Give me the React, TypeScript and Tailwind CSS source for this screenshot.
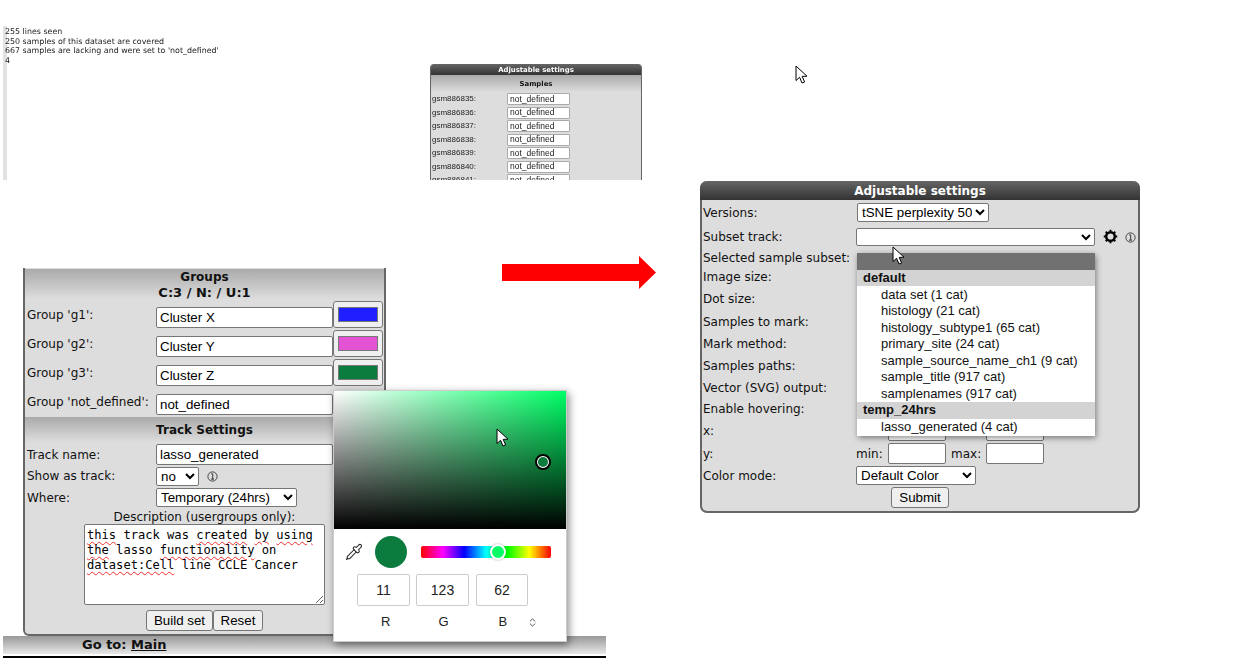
import { ChevronsUpDown, Pipette } from 'lucide-react';

const sampleIds = ['gsm886835', 'gsm886836', 'gsm886837', 'gsm886838', 'gsm886839', 'gsm886840', 'gsm886841'];
const groups = [
  { label: "Group 'g1':", value: 'Cluster X', color: 'bg-[#1f1fff]' },
  { label: "Group 'g2':", value: 'Cluster Y', color: 'bg-[#e353d3]' },
  { label: "Group 'g3':", value: 'Cluster Z', color: 'bg-[#0b7b3e]' },
];
const defaultTracks = [
  'data set (1 cat)',
  'histology (21 cat)',
  'histology_subtype1 (65 cat)',
  'primary_site (24 cat)',
  'sample_source_name_ch1 (9 cat)',
  'sample_title (917 cat)',
  'samplenames (917 cat)',
];

const field = "border border-[#767676] rounded-[2px] bg-white text-black font-['Liberation_Sans'] text-[13.33px] outline-none";
const nativeButton = "border border-[#767676] rounded-[3px] bg-[#efefef] text-black font-['Liberation_Sans'] text-[13.33px]";
const squiggle = 'underline decoration-wavy decoration-[#f03030] decoration-1 underline-offset-2';

function Cursor({ className }: { className: string }) {
  return (
    <svg className={className} width="14" height="20" viewBox="0 0 14 20">
      <path d="M1 1 L1 15.5 L4.6 12.3 L7 18 L9.6 17 L7.2 11.4 L12 11.2 Z" fill="#fff" stroke="#000" strokeWidth="1" />
    </svg>
  );
}

function InfoIcon({ className }: { className: string }) {
  return (
    <svg className={className} width="11" height="11" viewBox="0 0 10 10" fill="none" stroke="#333">
      <circle cx="5" cy="5" r="4.2" strokeWidth="0.8" />
      <path d="M3.8 2.6 H5.2 V7.4 M3.6 7.4 H6.4" strokeWidth="0.9" />
    </svg>
  );
}

function GearIcon() {
  return (
    <svg className="ml-[8px]" width="15" height="15" viewBox="0 0 16 16" fill="none" stroke="#000">
      <circle cx="8" cy="8" r="4.6" strokeWidth="2.6" />
      <path
        d="M8 0.8 V2.6 M8 13.4 V15.2 M0.8 8 H2.6 M13.4 8 H15.2 M2.9 2.9 L4.1 4.1 M11.9 11.9 L13.1 13.1 M13.1 2.9 L11.9 4.1 M4.1 11.9 L2.9 13.1"
        strokeWidth="2"
      />
    </svg>
  );
}

function LogText() {
  return (
    <div className="absolute left-[3px] top-[26px] h-[154px] w-[300px] border-l-[4px] border-[#e2e2e2] pt-[1px] text-[7.9px] leading-[9.5px] text-[#222] blur-[0.25px]">
      <div className="-ml-[2px]">
        <p>255 lines seen</p>
        <p>250 samples of this dataset are covered</p>
        <p>667 samples are lacking and were set to 'not_defined'</p>
        <p>4</p>
      </div>
    </div>
  );
}

function SamplesPanel() {
  return (
    <div className="absolute left-[430px] top-[64px] h-[116px] w-[212px] overflow-hidden rounded-t-[4px] border-x border-[#666] bg-[#ddd] blur-[0.25px]">
      <div className="flex h-[11px] items-center justify-center bg-linear-to-b from-[#666] to-[#333] pt-[1px] text-[6.9px] font-bold text-white">
        Adjustable settings
      </div>
      <div className="flex h-[17px] items-center justify-center bg-linear-to-b from-[#aaa] to-[#ddd] pt-[1px] text-[6.9px] font-bold text-[#111]">
        Samples
      </div>
      <div className="flex flex-col gap-[1.5px] pt-[1px] pl-[1px]">
        {sampleIds.map((id) => (
          <div key={id} className="flex h-[12px] items-center text-[#222]">
            <span className="w-[75px] font-['Liberation_Sans'] text-[8px]">{id}:</span>
            <span className="flex h-[12px] w-[63px] items-center rounded-[1px] border border-[#aaa] bg-white pl-[2px] font-['Liberation_Sans'] text-[8.5px]">
              not_defined
            </span>
          </div>
        ))}
      </div>
    </div>
  );
}

function GroupsPanel() {
  return (
    <div className="absolute left-[23px] top-[268px] h-[368px] w-[363px] rounded-b-[6px] border-x-2 border-b-2 border-[#666] bg-[#ddd] text-[12px] text-[#111]">
      <div className="mt-[1px] flex h-[30px] flex-col items-center justify-center bg-linear-to-b from-[#aaa] to-[#ddd] pt-[2px] text-[12px] leading-[15px] font-bold">
        <span>Groups</span>
        <span className="text-[13px]">C:3 / N: / U:1</span>
      </div>
      {groups.map((g) => (
        <div key={g.label} className="flex h-[29px] items-start">
          <span className="w-[131px] pt-[7px] pl-[2px]">{g.label}</span>
          <input defaultValue={g.value} className={`${field} mt-[8px] h-[21px] w-[177px] px-[3px]`} />
          <span className={`${nativeButton} mt-[2px] flex h-[27px] w-[50px] items-center justify-center`}>
            <span className={`h-[15px] w-[40px] border border-[#777] ${g.color}`} />
          </span>
        </div>
      ))}
      <div className="flex h-[29px] items-start">
        <span className="w-[131px] pt-[7px] pl-[2px]">Group 'not_defined':</span>
        <input defaultValue="not_defined" className={`${field} mt-[8px] h-[21px] w-[177px] px-[3px]`} />
      </div>
      <div className="mt-[2px] flex h-[25px] items-center justify-center bg-linear-to-b from-[#aaa] to-[#ddd] text-[12px] font-bold">
        Track Settings
      </div>
      <div className="flex h-[23px] items-center pt-[2px]">
        <span className="w-[131px] pl-[2px]">Track name:</span>
        <input defaultValue="lasso_generated" className={`${field} h-[21px] w-[177px] px-[3px]`} />
      </div>
      <div className="flex h-[22px] items-center">
        <span className="w-[131px] pl-[2px]">Show as track:</span>
        <select defaultValue="no" className={`${field} h-[19px] w-[43px]`}>
          <option>no</option>
          <option>yes</option>
        </select>
        <InfoIcon className="ml-[8px]" />
      </div>
      <div className="flex h-[21px] items-center">
        <span className="w-[131px] pl-[2px]">Where:</span>
        <select defaultValue="Temporary (24hrs)" className={`${field} h-[19px] w-[141px]`}>
          <option>Temporary (24hrs)</option>
        </select>
      </div>
      <div className="flex h-[16px] items-center justify-center pt-[1px]">Description (usergroups only):</div>
      <div className="relative mx-auto h-[81px] w-[241px] rounded-[2px] border border-[#767676] bg-white px-[2px] pt-[3px] font-['DejaVu_Sans_Mono'] text-[12.1px] leading-[15px] text-black">
        <p>
          <span className={squiggle}>this</span> track was <span className={squiggle}>created</span>{' '}
          <span className={squiggle}>by</span> <span className={squiggle}>using</span>
        </p>
        <p>
          <span className={squiggle}>the</span> lasso <span className={squiggle}>functionality</span> on
        </p>
        <p>
          <span className={squiggle}>dataset:Cell</span> line CCLE Cancer
        </p>
        <svg className="absolute right-0 bottom-0" width="9" height="9" viewBox="0 0 9 9" stroke="#666">
          <path d="M1 8 L8 1 M5 8 L8 5" strokeWidth="1" />
        </svg>
      </div>
      <div className="mt-[5px] flex justify-center">
        <button className={`${nativeButton} h-[21px] w-[67px]`}>Build set</button>
        <button className={`${nativeButton} h-[21px] w-[50px]`}>Reset</button>
      </div>
    </div>
  );
}

function ColorPicker() {
  return (
    <div className="absolute left-[333px] top-[390px] z-10 h-[252px] w-[234px] border border-[#ccc] bg-white shadow-[2px_3px_8px_rgba(0,0,0,0.45)]">
      <div className="relative h-[138px] bg-[#00ff66] bg-[linear-gradient(to_top,#000,transparent),linear-gradient(to_right,#fff,transparent)]">
        <span className="absolute left-[201px] top-[63px] h-[16px] w-[16px] rounded-full border-2 border-black bg-white p-[1px]">
          <span className="block h-full w-full rounded-full bg-[#0b7b3e]" />
        </span>
      </div>
      <div className="flex h-[45px] items-center pl-[11px]">
        <Pipette size={18} strokeWidth={1.4} className="mt-[1px] text-[#222]" />
        <span className="ml-[12px] h-[32px] w-[32px] rounded-full bg-[#0b7b3e]" />
        <span className="relative ml-[14px] h-[12px] w-[130px] rounded-[2px] bg-[linear-gradient(to_right,#f00,#f0f,#00f,#0ff,#0f0,#ff0,#f00)]">
          <span className="absolute left-[69px] top-[-2px] h-[16px] w-[16px] rounded-full border-2 border-white bg-[#00ff66] shadow-[0_0_2px_rgba(0,0,0,0.4)]" />
        </span>
      </div>
      <div className="flex pl-[23px] text-[14px] font-['Liberation_Sans'] text-[#222]">
        <span className="flex h-[32px] w-[53px] items-center justify-center rounded-[2px] border border-[#ccc]">11</span>
        <span className="ml-[6px] flex h-[32px] w-[53px] items-center justify-center rounded-[2px] border border-[#ccc]">123</span>
        <span className="ml-[7px] flex h-[32px] w-[52px] items-center justify-center rounded-[2px] border border-[#ccc]">62</span>
      </div>
      <div className="mt-[8px] flex h-[16px] items-center pl-[47px] text-[13px] font-['Liberation_Sans'] text-[#222]">
        <span>R</span>
        <span className="ml-[48px]">G</span>
        <span className="ml-[50px]">B</span>
        <ChevronsUpDown size={11} className="ml-[20px] text-[#444]" />
      </div>
    </div>
  );
}

function GoToBar() {
  return (
    <div className="absolute left-[3px] top-[636px] w-[603px]">
      <div className="flex h-[18px] items-center bg-linear-to-b from-[#999] to-[#e8e8e8] pl-[79px] text-[13px] font-bold text-[#111]">
        Go to:&nbsp;<span className="underline">Main</span>
      </div>
      <div className="mt-[2px] h-[2px] bg-black" />
    </div>
  );
}

function Arrow() {
  return (
    <svg className="absolute left-[502px] top-[256px]" width="155" height="33" viewBox="0 0 155 33">
      <path d="M0 8 H137 V0 L154 16.5 L137 33 V25 H0 Z" fill="#ff0000" />
    </svg>
  );
}

function SubsetDropdown() {
  return (
    <div className="absolute left-[155px] top-[53px] z-10 w-[238px] bg-white font-['Liberation_Sans'] text-[13px] text-[#111] shadow-[1px_2px_6px_rgba(0,0,0,0.45)]">
      <div className="h-[17px] bg-[#717171]" />
      <div className="flex h-[16px] items-center bg-[#d3d3d3] pl-[6px] font-bold">default</div>
      {defaultTracks.map((t) => (
        <div key={t} className="flex h-[16.5px] items-center pl-[24px]">
          {t}
        </div>
      ))}
      <div className="flex h-[17px] items-center bg-[#d3d3d3] pl-[6px] font-bold">temp_24hrs</div>
      <div className="flex h-[17px] items-center pl-[24px]">lasso_generated (4 cat)</div>
    </div>
  );
}

function SettingsPanel() {
  return (
    <div className="absolute left-[700px] top-[181px] h-[332px] w-[440px] rounded-[7px] border-x-2 border-b-2 border-[#666] bg-[#ddd] text-[12px] text-[#111]">
      <div className="-mx-[2px] flex h-[19px] items-center justify-center rounded-t-[7px] bg-linear-to-b from-[#666] to-[#333] pt-[1px] text-[12px] font-bold text-white">
        Adjustable settings
      </div>
      <div className="relative pl-[1px]">
        <div className="flex h-[25px] items-center">
          <span className="w-[154px]">Versions:</span>
          <select defaultValue="tSNE perplexity 50" className={`${field} h-[19px] w-[132px]`}>
            <option>tSNE perplexity 50</option>
          </select>
        </div>
        <div className="flex h-[23px] items-center">
          <span className="w-[153px]">Subset track:</span>
          <select className={`${field} h-[18px] w-[239px]`}>
            <option />
          </select>
          <GearIcon />
          <InfoIcon className="mt-[2px] ml-[7px]" />
        </div>
        <div className="flex h-[19px] items-center">Selected sample subset:</div>
        <div className="flex h-[20px] items-center">Image size:</div>
        <div className="flex h-[23px] items-center">Dot size:</div>
        <div className="flex h-[23px] items-center">Samples to mark:</div>
        <div className="flex h-[22px] items-center">Mark method:</div>
        <div className="flex h-[22px] items-center">Samples paths:</div>
        <div className="flex h-[22px] items-center">Vector (SVG) output:</div>
        <div className="flex h-[20px] items-center">Enable hovering:</div>
        <div className="flex h-[23px] items-center">
          <span className="w-[153px]">x:</span>
          <span className="w-[32px]" />
          <input className={`${field} h-[21px] w-[58px]`} />
          <span className="ml-[5px] w-[35px]" />
          <input className={`${field} h-[21px] w-[58px]`} />
        </div>
        <div className="flex h-[23px] items-center">
          <span className="w-[153px]">y:</span>
          <span className="w-[32px]">min:</span>
          <input className={`${field} h-[21px] w-[58px]`} />
          <span className="ml-[5px] w-[35px]">max:</span>
          <input className={`${field} h-[21px] w-[58px]`} />
        </div>
        <div className="flex h-[21px] items-center">
          <span className="w-[153px]">Color mode:</span>
          <select defaultValue="Default Color" className={`${field} h-[19px] w-[120px]`}>
            <option>Default Color</option>
          </select>
        </div>
        <div className="flex h-[23px] items-center justify-center pr-[1px]">
          <button className={`${nativeButton} h-[21px] w-[58px]`}>Submit</button>
        </div>
        <SubsetDropdown />
      </div>
    </div>
  );
}

export default function App() {
  return (
    <div className="relative h-[667px] w-[1236px] overflow-hidden bg-white font-['DejaVu_Sans',sans-serif]">
      <LogText />
      <SamplesPanel />
      <Cursor className="absolute left-[795px] top-[65px]" />
      <Arrow />
      <GroupsPanel />
      <GoToBar />
      <ColorPicker />
      <Cursor className="absolute left-[496px] top-[428px] z-20" />
      <SettingsPanel />
      <Cursor className="absolute left-[892px] top-[246px] z-20" />
    </div>
  );
}
